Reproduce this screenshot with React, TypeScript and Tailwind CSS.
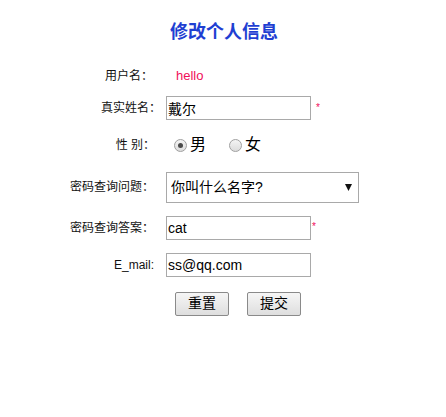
import React from "react";

const FONT = '"Liberation Sans", "Noto Sans CJK SC", sans-serif';

function Row({
  h,
  label,
  labelClass,
  children,
}: {
  h: string;
  label: string;
  labelClass: string;
  children?: React.ReactNode;
}) {
  return (
    <div className={`flex items-center ${h}`}>
      <div className={`w-[166px] shrink-0 text-right text-[12px] text-[#111] ${labelClass}`}>{label}</div>
      <div className="flex items-center">{children}</div>
    </div>
  );
}

function Radio({ checked }: { checked?: boolean }) {
  return (
    <span className="w-[13px] h-[13px] rounded-full border border-[#a0a0a0] bg-gradient-to-b from-[#f4f4f4] to-[#dcdcdc] flex items-center justify-center">
      {checked ? <span className="w-[5px] h-[5px] rounded-full bg-[#4a4a4a]" /> : null}
    </span>
  );
}

export default function App() {
  return (
    <div className="w-[446px] h-[417px] bg-white" style={{ fontFamily: FONT }}>
      <div className="h-[61px] flex justify-center items-center pt-[2px] pl-[2px]">
        <h1 className="text-[18px] font-bold text-[#1f3fd2] leading-none">修改个人信息</h1>
      </div>

      <Row h="h-[30px]" label="用户名：" labelClass="pr-[13px]">
        <span className="ml-[10px] text-[13px] text-[#f0105a]">hello</span>
      </Row>

      <Row h="h-[33px]" label="真实姓名：" labelClass="pr-[5px]">
        <input
          readOnly
          value="戴尔"
          className="w-[145px] h-[24px] border border-[#a9a9a9] px-[1px] text-[14px] text-black outline-none"
        />
        <span className="ml-[5px] text-[10px] text-[#f0105a]">*</span>
      </Row>

      <Row h="h-[42px]" label="性 别：" labelClass="pr-[11px]">
        <span className="ml-[8px] flex items-center">
          <Radio checked />
          <span className="ml-[3px] text-[16px] text-black">男</span>
        </span>
        <span className="ml-[23px] flex items-center">
          <Radio />
          <span className="ml-[3px] text-[16px] text-black">女</span>
        </span>
      </Row>

      <Row h="h-[42px]" label="密码查询问题：" labelClass="pr-[12px]">
        <div className="relative w-[193px] h-[31px]">
          <select
            defaultValue="a"
            className="appearance-none w-full h-full border border-[#a9a9a9] bg-white pl-[4px] text-[14px] text-black outline-none"
          >
            <option value="a">你叫什么名字?</option>
          </select>
          <svg className="absolute right-[7px] top-[12px] pointer-events-none" width="7" height="7" viewBox="0 0 7 7">
            <polygon points="0,0 7,0 3.5,7" fill="#111" />
          </svg>
        </div>
      </Row>

      <Row h="h-[40px]" label="密码查询答案：" labelClass="pr-[12px]">
        <input
          readOnly
          value="cat"
          className="w-[145px] h-[24px] border border-[#a9a9a9] px-[1px] text-[14px] text-black outline-none"
        />
        <span className="ml-[1px] text-[10px] text-[#f0105a] -mt-[4px]">*</span>
      </Row>

      <Row h="h-[33px]" label="E_mail:" labelClass="pr-[12px]">
        <input
          readOnly
          value="ss@qq.com"
          className="w-[145px] h-[24px] border border-[#a9a9a9] px-[1px] text-[14px] text-black outline-none"
        />
      </Row>

      <div className="flex items-center h-[45px]">
        <div className="w-[175px] shrink-0" />
        <button className="w-[54px] h-[24px] border border-[#8a8a8a] rounded-[2px] bg-gradient-to-b from-[#f6f6f6] to-[#dedede] text-[14px] text-black">
          重置
        </button>
        <button className="ml-[18px] w-[54px] h-[24px] border border-[#8a8a8a] rounded-[2px] bg-gradient-to-b from-[#f6f6f6] to-[#dedede] text-[14px] text-black">
          提交
        </button>
      </div>
    </div>
  );
}
